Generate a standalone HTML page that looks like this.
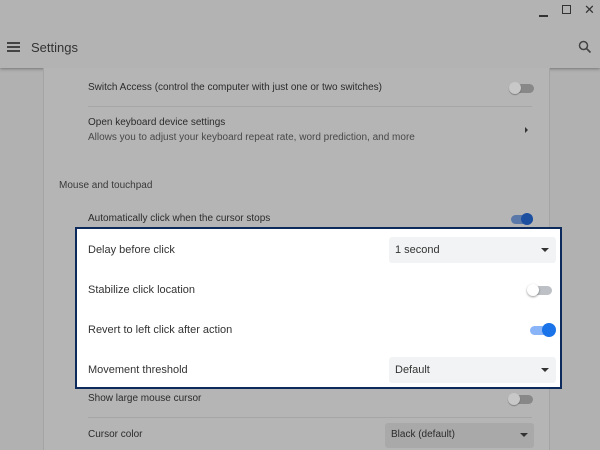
<!DOCTYPE html>
<html><head><style>
*{margin:0;padding:0;box-sizing:border-box}
body{width:600px;height:450px;overflow:hidden;background:#b1b1b1;font-family:"Liberation Sans",Arial,sans-serif;color:#2a2a2a;position:relative}
.a{position:absolute}
.t{font-size:10px;color:#2b2b2b;white-space:nowrap}
.hdr{left:0;top:0;width:600px;height:68px;background:#b3b3b3;box-shadow:0 1px 3px rgba(0,0,0,.35)}
.card{left:43px;top:68px;width:507px;height:382px;background:#b5b5b5;border-left:1px solid #a4a4a4;border-right:1px solid #a4a4a4}
.tog{width:22px;height:9px;border-radius:5px}
.knob{width:12px;height:12px;border-radius:50%}
.sel{background:#a9a9a9;border-radius:3px}
.tri{width:0;height:0;border-left:4px solid transparent;border-right:4px solid transparent;border-top:4px solid #333}
.hl{left:75px;top:227px;width:487px;height:162px;background:#fff;border:2px solid #0d2a5c}
.hl .t{font-size:11px;color:#333}
</style></head><body>
<div class="a hdr"></div>
<div class="a" style="left:539px;top:15px;width:9px;height:1.5px;background:#333"></div>
<div class="a" style="left:562px;top:5px;width:9px;height:9px;border:1.5px solid #333"></div>
<div class="a" style="left:584px;top:2px;font-size:13px;color:#333">✕</div>
<div class="a" style="left:7px;top:42px;width:13px;height:2px;background:#444;box-shadow:0 4px 0 #444,0 8px 0 #444"></div>
<div class="a" style="left:31px;top:40px;font-size:13px;color:#333">Settings</div>
<svg class="a" style="left:578px;top:40px" width="14" height="14" viewBox="0 0 14 14"><circle cx="5.5" cy="5.5" r="4" fill="none" stroke="#444" stroke-width="1.5"/><path d="M8.5 8.5L12.5 12.5" stroke="#444" stroke-width="1.6"/></svg>
<div class="a card"></div>
<div class="a t" style="left:88px;top:82px">Switch Access (control the computer with just one or two switches)</div>
<div class="a tog" style="left:512px;top:84px;background:#888"></div>
<div class="a knob" style="left:509px;top:82px;background:#c8c8c8;box-shadow:0 1px 1px rgba(0,0,0,.3)"></div>
<div class="a" style="left:88px;top:106px;width:444px;height:1px;background:#a6a6a6"></div>
<div class="a t" style="left:88px;top:117px">Open keyboard device settings</div>
<div class="a t" style="left:88px;top:132px;color:#484848">Allows you to adjust your keyboard repeat rate, word prediction, and more</div>
<div class="a" style="left:525px;top:127px;border-top:3px solid transparent;border-bottom:3px solid transparent;border-left:3px solid #333"></div>
<div class="a t" style="left:59px;top:180px;color:#3a3a3a">Mouse and touchpad</div>
<div class="a t" style="left:88px;top:213px">Automatically click when the cursor stops</div>
<div class="a tog" style="left:511px;top:215px;background:#5b79a8"></div>
<div class="a knob" style="left:521px;top:213px;background:#1d4fa0"></div>
<div class="a hl"></div>
<div class="a t" style="left:88px;top:244px;font-size:11px;color:#333">Delay before click</div>
<div class="a sel" style="left:389px;top:237px;width:167px;height:26px;background:#f1f3f4"></div>
<div class="a t" style="left:395px;top:244px;font-size:11px;color:#333">1 second</div>
<div class="a tri" style="left:541px;top:248px"></div>
<div class="a t" style="left:88px;top:284px;font-size:11px;color:#333">Stabilize click location</div>
<div class="a tog" style="left:530px;top:286px;background:#bdc1c6"></div>
<div class="a knob" style="left:527px;top:284px;background:#fff;box-shadow:0 1px 2px rgba(0,0,0,.4)"></div>
<div class="a t" style="left:88px;top:324px;font-size:11px;color:#333">Revert to left click after action</div>
<div class="a tog" style="left:530px;top:326px;background:#8ab4f8"></div>
<div class="a knob" style="left:542px;top:323px;width:14px;height:14px;background:#1a73e8"></div>
<div class="a t" style="left:88px;top:364px;font-size:11px;color:#333">Movement threshold</div>
<div class="a sel" style="left:389px;top:357px;width:167px;height:26px;background:#f1f3f4"></div>
<div class="a t" style="left:395px;top:364px;font-size:11px;color:#333">Default</div>
<div class="a tri" style="left:541px;top:368px"></div>
<div class="a t" style="left:88px;top:393px">Show large mouse cursor</div>
<div class="a tog" style="left:511px;top:395px;background:#888"></div>
<div class="a knob" style="left:508px;top:393px;background:#c8c8c8;box-shadow:0 1px 1px rgba(0,0,0,.3)"></div>
<div class="a" style="left:88px;top:417px;width:444px;height:1px;background:#a6a6a6"></div>
<div class="a sel" style="left:385px;top:423px;width:149px;height:25px"></div>
<div class="a t" style="left:88px;top:429px">Cursor color</div>
<div class="a t" style="left:391px;top:429px">Black (default)</div>
<div class="a tri" style="left:520px;top:433px"></div>
</body></html>
